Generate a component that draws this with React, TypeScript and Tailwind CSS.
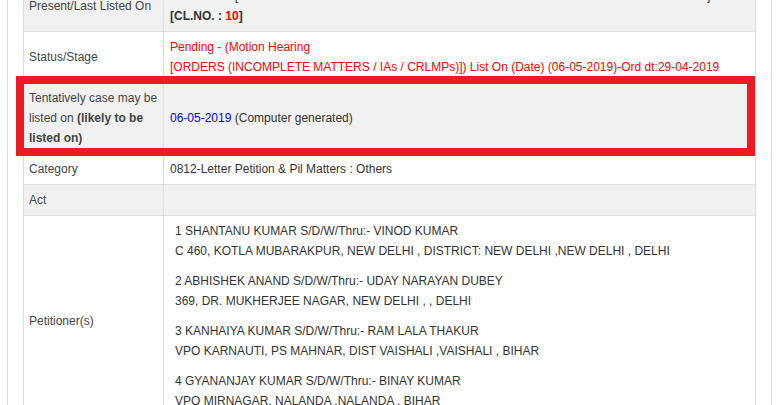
import React from 'react';

interface Petitioner {
  name: string;
  address: string;
}

const petitioners: Petitioner[] = [
  { name: '1 SHANTANU KUMAR S/D/W/Thru:- VINOD KUMAR', address: 'C 460, KOTLA MUBARAKPUR, NEW DELHI , DISTRICT: NEW DELHI ,NEW DELHI , DELHI' },
  { name: '2 ABHISHEK ANAND S/D/W/Thru:- UDAY NARAYAN DUBEY', address: '369, DR. MUKHERJEE NAGAR, NEW DELHI , , DELHI' },
  { name: '3 KANHAIYA KUMAR S/D/W/Thru:- RAM LALA THAKUR', address: 'VPO KARNAUTI, PS MAHNAR, DIST VAISHALI ,VAISHALI , BIHAR' },
  { name: '4 GYANANJAY KUMAR S/D/W/Thru:- BINAY KUMAR', address: 'VPO MIRNAGAR, NALANDA ,NALANDA , BIHAR' },
];

const labelCls = 'w-[140px] border border-[#dddddd] px-[5px] py-[5px] text-[#444444] align-middle';
const valueCls = 'border border-[#dddddd] px-[6px] py-[5px] text-[#333333] align-middle';

const App: React.FC = () => {
  return (
    <div className="h-[405px] overflow-hidden bg-white font-['Liberation_Sans',Arial,sans-serif] text-[12px] leading-[20px]">
      <div className="relative mx-[7px] -mt-[20px] border-x border-[#dddddd] px-[15px]">
        <table className="w-full border-collapse">
          <tbody>
            {/* Listing row (scrolled partly out of view) */}
            <tr className="bg-[#f1f1f1]">
              <td className={labelCls}>Present/Last Listed On</td>
              <td className={valueCls}>
                <div className="whitespace-nowrap">
                  06-05-2019 [HON'BLE THE CHIEF JUSTICE AND HON'BLE JUSTICE ANUP JAIRAM BHAMBHANI ]
                </div>
                <div className="font-bold">
                  [CL.NO. : <span className="text-[#ff0000]">10</span>]
                </div>
              </td>
            </tr>
            <tr className="bg-white">
              <td className={labelCls}>Status/Stage</td>
              <td className={`${valueCls} !text-[#ff0000]`}>
                <div>Pending - (Motion Hearing</div>
                <div>[ORDERS (INCOMPLETE MATTERS / IAs / CRLMPs)]) List On (Date) (06-05-2019)-Ord dt:29-04-2019</div>
              </td>
            </tr>
            <tr className="bg-[#f1f1f1]">
              <td className={labelCls}>
                Tentatively case may be listed on <b>(likely to be listed on)</b>
              </td>
              <td className={valueCls}>
                <span className="text-[#0000ff]">06-05-2019</span> (Computer generated)
              </td>
            </tr>
            <tr className="bg-white">
              <td className={labelCls}>Category</td>
              <td className={valueCls}>0812-Letter Petition &amp; Pil Matters : Others</td>
            </tr>
            <tr className="bg-[#f1f1f1]">
              <td className={labelCls}>Act</td>
              <td className={valueCls}></td>
            </tr>
            <tr className="bg-white">
              <td className={labelCls}>Petitioner(s)</td>
              <td className={valueCls}>
                {petitioners.map((p) => (
                  <div key={p.name} className="mb-[10px] pl-[5px]">
                    <div>{p.name}</div>
                    <div>{p.address}</div>
                  </div>
                ))}
              </td>
            </tr>
          </tbody>
        </table>

        {/* red annotation around the tentative date row */}
        <div className="pointer-events-none absolute left-[8px] top-[96px] h-[80px] w-[739px] border-[8px] border-[#ed1c24]" />
      </div>
    </div>
  );
};

export default App;
